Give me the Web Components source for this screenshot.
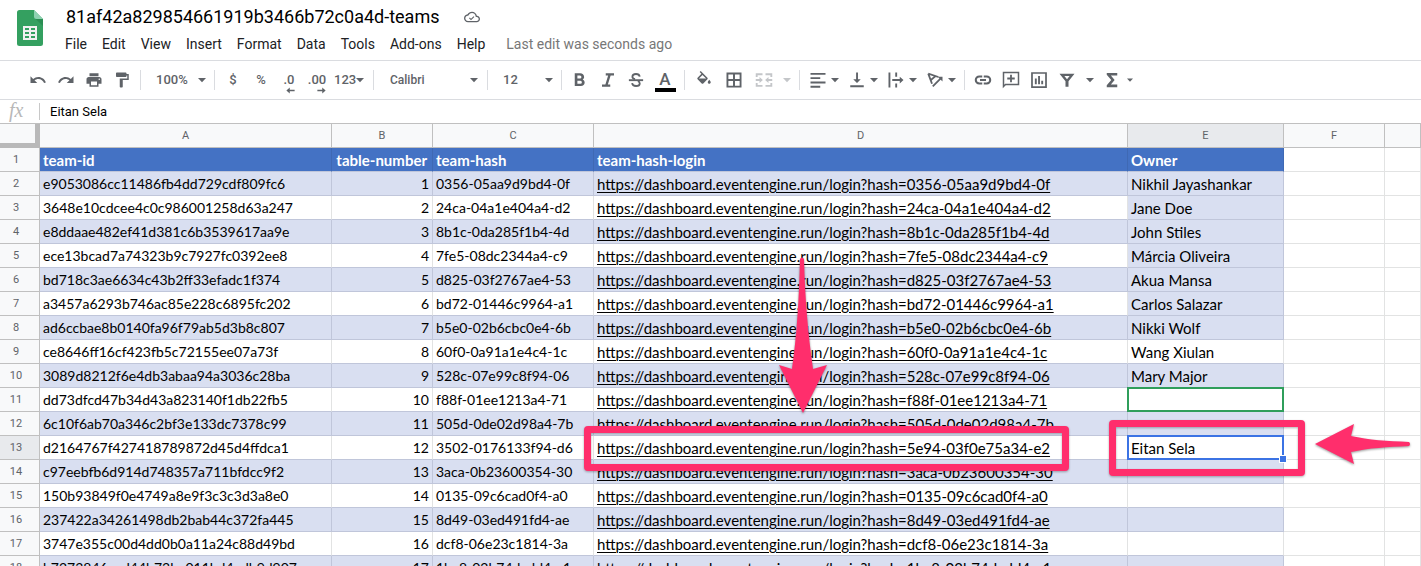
<!DOCTYPE html>
<html lang="en">
<head>
<meta charset="utf-8">
<title>81af42a829854661919b3466b72c0a4d-teams</title>
<style>
html, body { margin: 0; height: 100%; overflow: hidden; background: #fff; }
body { font-family: Roboto, sans-serif; }
</style>
</head>
<body>
<sheet-app></sheet-app>
<script>
const ICONS = {
  undo: '<path d="M12.5 8c-2.650 0-5.050.99-6.900 2.600L2 7v9h9l-3.620-3.620c1.390-1.160 3.160-1.880 5.120-1.880 3.540 0 6.550 2.310 7.600 5.500l2.370-.78C21.080 11.030 17.150 8 12.500 8z"/>',
  redo: '<path d="M18.4 10.6C16.55 8.99 14.15 8 11.5 8c-4.65 0-8.58 3.03-9.96 7.22L3.9 16c1.05-3.19 4.05-5.5 7.6-5.5 1.95 0 3.73.72 5.12 1.88L13 16h9V7l-3.6 3.6z"/>',
  print: '<path d="M19 8H5c-1.66 0-3 1.34-3 3v6h4v4h12v-4h4v-6c0-1.66-1.34-3-3-3zm-3 11H8v-5h8v5zm3-7c-.55 0-1-.45-1-1s.45-1 1-1 1 .45 1 1-.45 1-1 1zm-1-9H6v4h12V3z"/>',
  paint: '<path d="M18 4V3c0-.55-.45-1-1-1H5c-.55 0-1 .45-1 1v4c0 .55.45 1 1 1h12c.55 0 1-.45 1-1V6h1v4H9v11c0 .55.45 1 1 1h2c.55 0 1-.45 1-1v-9h8V4h-3z"/>',
  left: '<path d="M10 4 1 12l9 8v-6h13v-4H10z"/>',
  bold: '<path d="M15.6 11.3c1.1-.8 1.9-2 1.9-3.300C17.500 5 15.200 3 12.300 3H5v17h8.200c2.900 0 5-2.200 5-4.800 0-1.800-1-3.200-2.600-3.900zM8.500 6h3.400a2 2 0 0 1 0 4H8.500zm4 11h-4v-4h4a2 2 0 0 1 0 4z"/>',
  italic: '<path d="M9 3v3h3.200l-3.700 12H4v3h11v-3h-3.200L15.500 6H20V3z"/>',
  strike: '<path d="M2.500 11h19v2.500h-19z"/><path d="M17 7.500C16.600 5.200 14.800 4 12 4 9.200 4 7.200 5.300 7.200 7.500c0 1.600 1.200 2.700 3.500 3.300M14.500 13.500c1.600.6 2.500 1.500 2.500 3 0 2.200-2 3.500-4.900 3.500-3 0-5-1.400-5.300-3.800" fill="none" stroke="currentColor" stroke-width="2.400"/>',
  fill: '<path d="M16.560 8.940 7.620 0 6.210 1.410l2.380 2.380-5.150 5.150c-.59.59-.59 1.540 0 2.120l5.500 5.500c.29.29.68.44 1.060.44s.77-.15 1.060-.44l5.500-5.500c.59-.58.59-1.530 0-2.120zM5.210 10 10 5.210 14.790 10H5.210zM19 11.500s-2 2.170-2 3.500c0 1.100.9 2 2 2s2-.9 2-2c0-1.330-2-3.500-2-3.500z"/>',
  borders: '<path d="M2 2v20h20V2zm8.700 17.500H4.500v-6.200h6.200zm0-8.800H4.500V4.500h6.200zm8.800 8.800h-6.200v-6.200h6.200zm0-8.800h-6.200V4.500h6.200z"/>',
  merge: '<path d="M1 3h9v2.500H3.500V8H1zM14 3h9v5h-2.500V5.500H14zM1 16h2.500v2.500H10V21H1zM20.500 16H23v5h-9v-2.500h6.500zM1 10.800h5V8l4.500 4L6 16v-2.800H1zM23 10.800h-5V8l-4.500 4 4.500 4v-2.800h5z"/>',
  align: '<path d="M2 2.500h20V5H2zM2 8.300h13v2.500H2zM2 14h20v2.500H2zM2 19.700h13v2.500H2z"/>',
  valign: '<path d="M3 19h18v2.600H3zM10.800 2h2.500v9h3.700l-5 5-5-5h3.800z"/>',
  wrap: '<path d="M2 2h2.500v20H2zM11 2h2.500v5.500H11zM11 16.500h2.500V22H11zM7 10.800h10V7.500l5 4.500-5 4.500v-3.200H7z"/>',
  rotate: '<path d="M3 3.500 16.500 8M3 3.500 8 17M6.500 12 13 6.500M9 20.500 20 9.500" fill="none" stroke="currentColor" stroke-width="2.400"/><path d="M15.500 7.500H22V14z"/>',
  link: '<path d="M3.700 12c0-1.820 1.480-3.300 3.300-3.300h4V6H7a6 6 0 0 0 0 12h4v-2.700H7A3.300 3.300 0 0 1 3.700 12zM8 13.300h8v-2.600H8zM17 6h-4v2.700h4a3.300 3.300 0 0 1 0 6.600h-4V18h4a6 6 0 0 0 0-12z"/>',
  comment: '<path d="M1 1v22l4-4h18V1zm20 16H4.200L3 18.200V3h18z"/><path d="M10.800 5h2.400v3.800H17v2.400h-3.800V15h-2.400v-3.800H7V8.800h3.800z"/>',
  chart: '<path d="M1.500 1.500v21h21v-21zm18.700 18.700H3.800V3.800h16.400z"/><path d="M6.500 10H9v7.500H6.500zM10.800 6.500h2.500v11h-2.500zM15 13h2.500v4.500H15z"/>',
  filter: '<path d="M2 3.500h20l-8 10V21h-4v-7.500zm6.500 3.200 3.500 4.300 3.500-4.300z" fill-rule="evenodd"/>',
  sigma: '<path d="M5 2.500h14V6H10.500l5 6-5 6H19v3.500H5V19l6-7-6-7z"/>',
  cloud: '<path d="M19.350 10.040C18.670 6.590 15.640 4 12 4 9.110 4 6.600 5.640 5.350 8.040 2.340 8.360 0 10.910 0 14c0 3.310 2.690 6 6 6h13c2.760 0 5-2.240 5-5 0-2.640-2.050-4.780-4.650-4.960zM19 18H6c-2.210 0-4-1.790-4-4 0-2.050 1.530-3.760 3.560-3.970l1.070-.11.5-.95C8.080 7.140 9.940 6 12 6c2.620 0 4.880 1.860 5.390 4.430l.3 1.500 1.530.11c1.560.1 2.780 1.410 2.780 2.960 0 1.650-1.350 3-3 3zm-8.500-3.500-1.800-1.800-1.200 1.200 3 3 5-5-1.200-1.200z"/>',
  caret: '<path d="M6 9h12l-6 6.500z"/>'
};

function attach(el, html) {
  const t = document.createElement('template');
  t.innerHTML = html;
  el.attachShadow({ mode: 'open' }).append(t.content.cloneNode(true));
}

customElements.define('sheet-icon', class extends HTMLElement {
  connectedCallback() {
    if (this.shadowRoot) return;
    attach(this, `<style>
      :host { display: block; width: var(--icon, 18px); height: var(--icon, 18px); flex: none; }
      svg { display: block; width: 100%; height: 100%; fill: currentColor; }
    </style><svg viewBox="0 0 24 24" aria-hidden="true">${ICONS[this.getAttribute('name')]}</svg>`);
  }
});

customElements.define('tool-button', class extends HTMLElement {
  connectedCallback() {
    if (this.shadowRoot) return;
    attach(this, `<style>
      :host { display: block; width: 28px; flex: none; }
      button { display: flex; align-items: center; justify-content: center; box-sizing: border-box; width: 100%; height: 28px;
        margin: 0; padding: 0 0 0 var(--start, 0); border: 0; background: none; color: inherit; font: inherit; }
    </style><button type="button" aria-label="${this.getAttribute('label')}"><slot></slot></button>`);
  }
});

customElements.define('tool-select', class extends HTMLElement {
  connectedCallback() {
    if (this.shadowRoot) return;
    attach(this, `<style>
      :host { display: grid; flex: none; align-items: center; --icon: 16px; }
      select { grid-area: 1 / 1; width: 100%; height: 28px; margin: 0; padding: 0 0 0 var(--pad, 11px); border: 0; appearance: none;
        background: none; color: inherit; font: inherit; }
      sheet-icon { grid-area: 1 / 1; justify-self: end; margin-right: var(--end, 0); pointer-events: none; }
    </style><select aria-label="${this.getAttribute('label')}"><option>${this.getAttribute('value')}</option></select>
    <sheet-icon name="caret"></sheet-icon>`);
  }
});

customElements.define('sheet-header', class extends HTMLElement {
  connectedCallback() {
    attach(this, `<style>
      :host { display: flex; box-sizing: border-box; height: 61px; border-bottom: 1px solid #dadce0; padding: 5px 17px 0; gap: 15px; }
      .logo { width: 26px; height: 36px; margin-top: 5px; flex: none; }
      .top { display: flex; align-items: center; height: 24px; gap: 25px; --icon: 16px; color: #5f6368; padding-left: 8px; }
      h1 { margin: 0; font: 400 18px/24px Roboto, sans-serif; color: #000; white-space: nowrap; }
      nav { display: flex; align-items: center; height: 20px; margin-top: 5px; gap: 1px; }
      button { margin: 0; padding: 0 7px; border: 0; background: none; font: 400 14px/20px Roboto, sans-serif; color: #202124; }
      a { margin-left: 13px; font-size: 14px; line-height: 20px; color: #777; text-decoration: none; white-space: nowrap; }
    </style>
    <svg class="logo" viewBox="0 0 26 36" aria-hidden="true">
      <path d="M2.500 0H17l9 9v24.500a2.500 2.500 0 0 1-2.500 2.500h-21A2.500 2.500 0 0 1 0 33.500v-31A2.500 2.500 0 0 1 2.500 0z" fill="#34a060"/>
      <path d="M17 0l9 9h-6.500A2.500 2.500 0 0 1 17 6.500z" fill="#8ed1b1"/><path d="M18.500 9H26v7z" fill="#25824b" opacity=".6"/>
      <path d="M6 16h14v14H6zm2 2v2h4v-2zm6 0v2h4v-2zm-6 4v2h4v-2zm6 0v2h4v-2zm-6 4v2h4v-2zm6 0v2h4v-2z" fill="#f1f1f1" fill-rule="evenodd"/>
    </svg>
    <div>
      <div class="top"><h1>81af42a829854661919b3466b72c0a4d-teams</h1><sheet-icon name="cloud"></sheet-icon></div>
      <nav aria-label="Menu">${['File', 'Edit', 'View', 'Insert', 'Format', 'Data', 'Tools', 'Add-ons', 'Help'].map(m => `<button type="button">${m}</button>`).join('')}<a href="#history">Last edit was seconds ago</a></nav>
    </div>`);
  }
});

customElements.define('sheet-toolbar', class extends HTMLElement {
  connectedCallback() {
    const b = (icon, label, cls = '') => `<tool-button class="${cls}" label="${label}"><sheet-icon name="${icon}"></sheet-icon></tool-button>`;
    const split = (icon, label) => `<tool-button class="split" label="${label}"><sheet-icon name="${icon}"></sheet-icon><sheet-icon class="caret" name="caret"></sheet-icon></tool-button>`;
    const sep = '<i></i>';
    attach(this, `<style>
      :host { display: flex; align-items: center; box-sizing: border-box; height: 39px; padding: 0 24px; border-bottom: 1px solid #dadce0;
        color: #5f6368; font: 500 13px/16px Roboto, sans-serif; }
      i { width: 1px; height: 20px; margin: 0 4px; background: #dadce0; flex: none; }
      .zoom, .size { width: 65px; }
      .format { width: 38px; --pad: 3px; --end: 1px; }
      .font { width: 105px; --pad: 12px; --end: 1px; font-size: 12px; }
      .w30 { width: 30px; }
      .off { color: #c4c6c9; }
      .split { width: 39px; --start: 4px; }
      .caret { --icon: 16px; }
      .more { width: 18px; --icon: 16px; }
      .narrow { width: 16px; --icon: 16px; }
      .tiny { width: 10px; --icon: 12px; }
      .sum { width: 26px; }
      .places { display: grid; line-height: 13px; padding-top: 8px; --icon: 9px; }
      .places sheet-icon { justify-self: end; }
      .flip { transform: rotate(180deg); }
      .ink { font-size: 17px; line-height: 17px; border-bottom: 4px solid #000; width: 21px; text-align: center; margin-top: 2px; }
    </style>
    ${b('undo', 'Undo')}${b('redo', 'Redo')}${b('print', 'Print')}${b('paint', 'Paint format')}${sep}
    <tool-select class="zoom" label="Zoom" value="100%"></tool-select>${sep}
    <tool-button label="Format as currency">$</tool-button><tool-button label="Format as percent">%</tool-button>
    <tool-button label="Decrease decimal places"><span class="places">.0<sheet-icon name="left"></sheet-icon></span></tool-button>
    <tool-button label="Increase decimal places"><span class="places">.00<sheet-icon class="flip" name="left"></sheet-icon></span></tool-button>
    <tool-select class="format" label="More formats" value="123"></tool-select>${sep}
    <tool-select class="font" label="Font" value="Calibri"></tool-select>${sep}
    <tool-select class="size" label="Font size" value="12"></tool-select>${sep}
    ${b('bold', 'Bold')}${b('italic', 'Italic')}${b('strike', 'Strikethrough')}
    <tool-button class="w30" label="Text color"><span class="ink">A</span></tool-button>${sep}
    ${b('fill', 'Fill color', 'w30')}${b('borders', 'Borders', 'w30')}${b('merge', 'Merge cells', 'w30 off')}${b('caret', 'Merge type', 'narrow off')}${sep}
    ${split('align', 'Horizontal align')}${split('valign', 'Vertical align')}${split('wrap', 'Text wrapping')}${split('rotate', 'Text rotation')}${sep}
    ${b('link', 'Insert link')}${b('comment', 'Insert comment')}${b('chart', 'Insert chart')}${b('filter', 'Create a filter')}${b('caret', 'Filter views', 'more')}${b('sigma', 'Functions', 'sum')}${b('caret', 'More functions', 'tiny')}`);
  }
});

customElements.define('formula-bar', class extends HTMLElement {
  connectedCallback() {
    attach(this, `<style>
      :host { display: flex; align-items: center; box-sizing: border-box; height: 24px; border-bottom: 1px solid #c0c0c0; }
      label { width: 39px; box-sizing: border-box; padding: 0 0 3px 9px; font: italic 20px/20px "Liberation Serif", serif; color: #b8b8b8; flex: none; }
      input { flex: 1; height: 17px; margin: 0; padding: 0 10px; border: 0; border-left: 1px solid #c8c8c8; outline: 0; background: none; font: 400 13px/17px Roboto, sans-serif; color: #000; }
    </style><label for="fx">fx</label><input id="fx" value="Eitan Sela">`);
  }
});

customElements.define('callout-box', class extends HTMLElement {
  connectedCallback() {
    attach(this, `<style>
      :host { display: block; position: absolute; box-sizing: border-box; border: 7px solid #ff2e6c; border-radius: 4px; z-index: 3;
        pointer-events: none; filter: drop-shadow(0 1px 1px rgba(0,0,0,.3)); }
    </style>`);
  }
});

customElements.define('callout-arrow', class extends HTMLElement {
  connectedCallback() {
    const down = this.getAttribute('to') === 'down';
    attach(this, `<style>
      :host { display: block; position: absolute; z-index: 4; pointer-events: none; filter: drop-shadow(0 1px 1px rgba(0,0,0,.4)); }
      svg { display: block; width: 100%; height: 100%; fill: #ff2e6c; }
    </style>${down
      ? '<svg viewBox="0 0 48 156"><path d="M21 2q2-3 4 0c1 40 4 75 9 110l14-4-24 48L0 108l13 4C18 77 20 42 21 2z"/></svg>'
      : '<svg viewBox="0 0 95 40"><path d="M0 20 39 0l-3 12c18 4 36 5 58 6q2 2 0 4c-22 1-40 2-58 6l3 12z"/></svg>'}`);
  }
});

const ROWS = [
  ['e9053086cc11486fb4dd729cdf809fc6', '0356-05aa9d9bd4-0f', 'Nikhil Jayashankar'],
  ['3648e10cdcee4c0c986001258d63a247', '24ca-04a1e404a4-d2', 'Jane Doe'],
  ['e8ddaae482ef41d381c6b3539617aa9e', '8b1c-0da285f1b4-4d', 'John Stiles'],
  ['ece13bcad7a74323b9c7927fc0392ee8', '7fe5-08dc2344a4-c9', 'Márcia Oliveira'],
  ['bd718c3ae6634c43b2ff33efadc1f374', 'd825-03f2767ae4-53', 'Akua Mansa'],
  ['a3457a6293b746ac85e228c6895fc202', 'bd72-01446c9964-a1', 'Carlos Salazar'],
  ['ad6ccbae8b0140fa96f79ab5d3b8c807', 'b5e0-02b6cbc0e4-6b', 'Nikki Wolf'],
  ['ce8646ff16cf423fb5c72155ee07a73f', '60f0-0a91a1e4c4-1c', 'Wang Xiulan'],
  ['3089d8212f6e4db3abaa94a3036c28ba', '528c-07e99c8f94-06', 'Mary Major'],
  ['dd73dfcd47b34d43a823140f1db22fb5', 'f88f-01ee1213a4-71', ''],
  ['6c10f6ab70a346c2bf3e133dc7378c99', '505d-0de02d98a4-7b', ''],
  ['d2164767f427418789872d45d4ffdca1', '3502-0176133f94-d6', 'Eitan Sela', '5e94-03f0e75a34-e2'],
  ['c97eebfb6d914d748357a711bfdcc9f2', '3aca-0b23600354-30', ''],
  ['150b93849f0e4749a8e9f3c3c3d3a8e0', '0135-09c6cad0f4-a0', ''],
  ['237422a34261498db2bab44c372fa445', '8d49-03ed491fd4-ae', ''],
  ['3747e355c00d4dd0b0a11a24c88d49bd', 'dcf8-06e23c1814-3a', ''],
  ['b7273846aed44b73be011bd4edb9d907', '1ba8-02b74dadd4-c1', '']
];
const TINTED_OWNERS = [3, 5, 7];

customElements.define('sheet-grid', class extends HTMLElement {
  connectedCallback() {
    const body = ROWS.map(([id, hash, owner, login], i) => {
      const n = i + 2, url = 'https://dashboard.eventengine.run/login?hash=' + (login || hash);
      const active = n === 13;
      return `<tr class="${n % 2 ? '' : 'band'}"><th scope="row" class="${active ? 'on' : ''}">${n}</th><td>${id}</td><td class="num">${i + 1}</td><td>${hash}</td>` +
        `<td><a href="${url}">${url}</a>${active ? '<callout-box class="box-login"></callout-box><callout-arrow class="arrow-login" to="down"></callout-arrow>' : ''}</td>` +
        `<td class="${TINTED_OWNERS.includes(n) ? 'tint' : ''}">${owner}${n === 11 ? '<span class="peer"></span>' : ''}${active ? '<span class="sel"></span><callout-box class="box-owner"></callout-box><callout-arrow class="arrow-owner" to="left"></callout-arrow>' : ''}</td><td></td><td></td></tr>`;
    }).join('');
    attach(this, `<style>
      :host { display: block; flex: 1; min-height: 0; overflow: hidden; }
      table { width: 100%; table-layout: fixed; border-collapse: separate; border-spacing: 0; }
      .h { width: 40px; } .a { width: 292px; } .b { width: 101px; } .c { width: 161px; } .d { width: 534px; } .e { width: 156px; } .f { width: 101px; }
      th, td { box-sizing: border-box; height: 24px; padding: 0 3px; border: 0 solid #e2e3e3; border-width: 0 1px 1px 0; white-space: nowrap; }
      th { background: #f8f9fa; border-color: #c0c0c0; color: #5f6368; font: 400 11px/20px Roboto, sans-serif; text-align: center; }
      tbody th { padding: 0 7px 0 0; }
      th.on { background: #e8eaed; }
      th.corner { border: solid #b9b9b9; border-width: 0 5px 5px 0; }
      td { position: relative; font: 400 14px/20px Lato, Carlito, sans-serif; color: #000; text-align: left; }
      td:nth-child(5), td:nth-child(6), .title td { font-size: 15px; }
      td:nth-child(-n+6) { border-bottom-color: #c0c6da; }
      .band td:nth-child(-n+6), td.tint { background: #d9dff1; border-color: #c0c6da; }
      .title td:nth-child(-n+6) { background: #4472c4; border-color: #3f69b4; border-bottom-color: #c0c6da; color: #fff; font-weight: 700; }
      td.num { text-align: right; }
      .title td.num { padding-right: 5px; }
      a { color: inherit; text-underline-offset: 2px; text-decoration-thickness: 1px; }
      .peer, .sel { position: absolute; inset: -1px; border: 2px solid #2f9e5b; z-index: 1; }
      .sel { border-color: #3b73e4; z-index: 2; }
      .sel::after { content: ""; position: absolute; right: -5px; bottom: -5px; width: 6px; height: 6px; border: 1px solid #fff; background: #3b73e4; }
      .box-login { left: -10px; top: -10px; width: 485px; height: 45px; }
      .arrow-login { left: 185px; top: -179px; width: 48px; height: 156px; }
      .box-owner { left: -19px; top: -16px; width: 196px; height: 56px; }
      .arrow-owner { left: 187px; top: -12px; width: 95px; height: 40px; }
    </style>
    <table>
      <colgroup><col class="h"><col class="a"><col class="b"><col class="c"><col class="d"><col class="e"><col class="f"><col></colgroup>
      <thead><tr><th class="corner"></th>${['A', 'B', 'C', 'D', 'E', 'F', ''].map(c => `<th scope="col" class="${c === 'E' ? 'on' : ''}">${c}</th>`).join('')}</tr></thead>
      <tbody><tr class="title"><th scope="row">1</th><td>team-id</td><td class="num">table-number</td><td>team-hash</td><td>team-hash-login</td><td>Owner</td><td></td><td></td></tr>${body}</tbody>
    </table>`);
  }
});

customElements.define('sheet-app', class extends HTMLElement {
  connectedCallback() {
    attach(this, `<style>:host { display: flex; flex-direction: column; height: 100vh; overflow: hidden; }
      sheet-header, sheet-toolbar, formula-bar { flex: none; }</style>
      <sheet-header></sheet-header><sheet-toolbar></sheet-toolbar><formula-bar></formula-bar><sheet-grid></sheet-grid>`);
  }
});
</script>
</body>
</html>
